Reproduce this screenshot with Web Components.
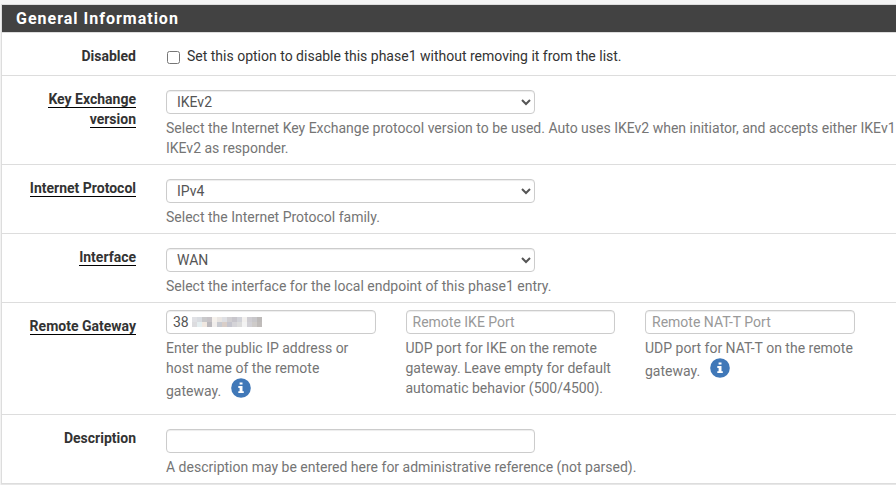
<!DOCTYPE html>
<html lang="en">
<head>
<meta charset="utf-8">
<title>General Information</title>
<style>
html,body{margin:0;height:100%;overflow:hidden}
body{background:#f4f4f4;font:14px/20px Roboto,"Liberation Sans",sans-serif;color:#333}
</style>
</head>
<body>
<settings-panel heading="General Information">
  <form-row label="Disabled" kind="check"><check-option>Set this option to disable this phase1 without removing it from the list.</check-option></form-row>
  <form-row label="Key Exchange version" required style="height:88px">
    <form-field kind="select" value="IKEv2">Select the Internet Key Exchange protocol version to be used. Auto uses IKEv2 when initiator, and accepts either IKEv1<br>IKEv2 as responder.</form-field>
  </form-row>
  <form-row label="Internet Protocol" required><form-field kind="select" value="IPv4">Select the Internet Protocol family.</form-field></form-row>
  <form-row label="Interface" required><form-field kind="select" value="WAN">Select the interface for the local endpoint of this phase1 entry.</form-field></form-row>
  <form-row label="Remote Gateway" required kind="group" style="height:111px">
    <form-field narrow value="38" masked>Enter the public IP address or<br>host name of the remote<br>gateway.<info-icon></info-icon></form-field>
    <form-field narrow placeholder="Remote IKE Port">UDP port for IKE on the remote<br>gateway. Leave empty for default<br>automatic behavior (500/4500).</form-field>
    <form-field narrow placeholder="Remote NAT-T Port">UDP port for NAT-T on the remote<br>gateway.<info-icon></info-icon></form-field>
  </form-row>
  <form-row label="Description" last><form-field>A description may be entered here for administrative reference (not parsed).</form-field></form-row>
</settings-panel>
<script>
class Base extends HTMLElement{
  connectedCallback(){
    if(!this.shadowRoot) this.attachShadow({mode:'open'}).innerHTML=this.render();
  }
}
customElements.define('settings-panel',class extends Base{
  render(){return `<style>
    :host{display:block;box-sizing:border-box;margin:4px 0 0 1px;width:910px;border:1px solid #ddd;background:#fff;box-shadow:0 1px 1px rgba(0,0,0,.05)}
    header{box-sizing:border-box;height:28px;padding:4px 0 0 14px;background:#424242;border-bottom:1px solid #ddd;color:#fff;font-weight:700;font-size:16px;line-height:20px;letter-spacing:1px}
    </style><header>${this.getAttribute('heading')}</header><slot></slot>`}
});
customElements.define('form-row',class extends Base{
  render(){return `<style>
    :host{display:grid;grid-template-columns:134px 1fr;column-gap:30px;height:68px;border-bottom:1px solid #ddd}
    :host([kind=check]){height:42px}
    :host([last]){border-bottom:0}
    .label{padding-top:13px;text-align:right;font-weight:700;padding-left:24px}
    :host([required]) .label span{border-bottom:1px solid #000}
    .content{display:flex;gap:30px;padding-top:14px}
    :host([kind=group]) .content{padding-top:7px}
    :host([kind=check]) .content{padding-top:13px}
    </style><div class="label"><span>${this.getAttribute('label')}</span></div><div class="content"><slot></slot></div>`}
});
customElements.define('check-option',class extends Base{
  render(){return `<style>
    :host{display:block;white-space:nowrap}
    label{display:flex;gap:7px}
    input{margin:5px 0 0 1px;width:13px;height:13px}
    </style><label><input type="checkbox"><span><slot></slot></span></label>`}
});
const mask=[
 ['#e0e1e5','#d9dce1','#c9c9cb','#c7c3c7','#f5f1ec','#e9e5e2','#dedfe3','#d1cfd2','#c8c6cc','#d2d3d9','#f2f0ee','#cfcdd2','#c8c7ca','#bdbab9'],
 ['#dcdcdf','#e5eef0','#f0e8e1','#bbb9bd','#f1eeec','#c9cbd1','#d9cec8','#c5c5ce','#d5d4d8','#dcdcdc','#f3f3f3','#d2d1d6','#cecbc9','#c0bcba']
];
customElements.define('form-field',class extends Base{
  render(){
    const v=this.getAttribute('value')||'';
    const control=this.getAttribute('kind')==='select'
      ?`<select><option>${v}</option></select>`
      :`<input type="text" value="${v}" placeholder="${this.getAttribute('placeholder')||''}">`;
    const cells=mask.map((r,y)=>r.map((c,x)=>`<rect x="${x*5}" y="${y*5}" width="5" height="5" fill="${c}"/>`).join('')).join('');
    return `<style>
    :host{display:block;width:369px;color:#757575;white-space:nowrap}
    :host([narrow]){width:209.5px}
    .box{position:relative;height:24px;margin-bottom:4px}
    input,select{display:block;box-sizing:border-box;width:100%;height:24px;margin:0;padding:0 6px;border:1px solid #ccc;border-radius:4px;background:#fff;color:#555;font:inherit;line-height:20px;letter-spacing:inherit;box-shadow:inset 0 1px 1px rgba(0,0,0,.075);outline:0}
    select{padding-right:7px}
    input::placeholder{color:#999;opacity:1}
    svg{position:absolute;left:26px;top:7px}
    </style><div class="box">${control}${this.hasAttribute('masked')?`<svg width="70" height="10" shape-rendering="crispEdges">${cells}</svg>`:''}</div><slot></slot>`}
});
customElements.define('info-icon',class extends Base{
  render(){return `<style>
    :host{display:inline-block;width:20px;height:20px;margin-left:10px;vertical-align:-2px}
    svg{display:block}
    </style><svg width="20" height="20" viewBox="0 0 20 20"><circle cx="10" cy="10" r="9.8" fill="#4078b8"/><path fill="#fff" d="M8.6 4.4h2.9v2.2H8.6zM7.3 8h4.2v5.2h1.3v1.9H7.3v-1.9h1.3V9.9H7.3z"/></svg>`}
});
</script>
</body>
</html>
